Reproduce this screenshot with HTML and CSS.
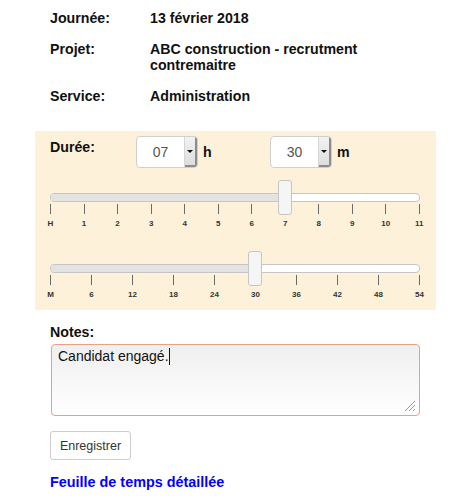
FILE: index.html
```html
<!DOCTYPE html>
<html lang="fr">
<head>
<meta charset="utf-8">
<title>Feuille de temps</title>
<link rel="stylesheet" href="styles.css">
</head>
<body>
<div class="page">
  <div class="info">
    <div class="lbl">Journée:</div><div class="val">13 février 2018</div>
    <div class="lbl">Projet:</div><div class="val">ABC construction - recrutment contremaitre</div>
    <div class="lbl">Service:</div><div class="val">Administration</div>
  </div>

  <div class="panel">
    <div class="duree-row">
      <div class="duree-lbl">Durée:</div>
      <div class="sel-group">
        <div class="sel"><span class="sel-val">07</span><span class="sel-btn"><span class="arrow"></span></span></div>
        <span class="unit">h</span>
      </div>
      <div class="sel-group">
        <div class="sel"><span class="sel-val">30</span><span class="sel-btn"><span class="arrow"></span></span></div>
        <span class="unit">m</span>
      </div>
    </div>

    <div class="slider s1">
      <div class="track">
        <div class="range" style="width:234px"></div>
        <div class="handle" style="left:227px"></div>
      </div>
      <div class="ticks">
        <div class="tick"><i></i><span>H</span></div>
        <div class="tick"><i></i><span>1</span></div>
        <div class="tick"><i></i><span>2</span></div>
        <div class="tick"><i></i><span>3</span></div>
        <div class="tick"><i></i><span>4</span></div>
        <div class="tick"><i></i><span>5</span></div>
        <div class="tick"><i></i><span>6</span></div>
        <div class="tick"><i></i><span>7</span></div>
        <div class="tick"><i></i><span>8</span></div>
        <div class="tick"><i></i><span>9</span></div>
        <div class="tick"><i></i><span>10</span></div>
        <div class="tick"><i></i><span>11</span></div>
      </div>
    </div>

    <div class="slider s2">
      <div class="track">
        <div class="range" style="width:204px"></div>
        <div class="handle" style="left:197px"></div>
      </div>
      <div class="ticks">
        <div class="tick"><i></i><span>M</span></div>
        <div class="tick"><i></i><span>6</span></div>
        <div class="tick"><i></i><span>12</span></div>
        <div class="tick"><i></i><span>18</span></div>
        <div class="tick"><i></i><span>24</span></div>
        <div class="tick"><i></i><span>30</span></div>
        <div class="tick"><i></i><span>36</span></div>
        <div class="tick"><i></i><span>42</span></div>
        <div class="tick"><i></i><span>48</span></div>
        <div class="tick"><i></i><span>54</span></div>
      </div>
    </div>
  </div>

  <div class="notes">
    <div class="notes-lbl">Notes:</div>
    <div class="textarea">Candidat engagé.<span class="caret"></span>
      <svg class="grip" width="12" height="12" viewBox="0 0 12 12">
        <line x1="11" y1="1" x2="1" y2="11" stroke="#999" stroke-width="1"/>
        <line x1="11" y1="5" x2="5" y2="11" stroke="#999" stroke-width="1"/>
        <line x1="11" y1="9" x2="9" y2="11" stroke="#999" stroke-width="1"/>
      </svg>
    </div>
    <button class="btn" type="button">Enregistrer</button>
    <a class="link" href="#">Feuille de temps détaillée</a>
  </div>
</div>
</body>
</html>
```

FILE: styles.css
```css
* { box-sizing: border-box; }
body {
  margin: 0;
  background: #fff;
  font-family: "Liberation Sans", Arial, sans-serif;
  color: #111;
}
.page {
  padding-top: 10px;
}
.info {
  display: grid;
  grid-template-columns: 100px 250px;
  row-gap: 15px;
  margin-left: 50px;
  font-size: 14.2px;
  line-height: 16px;
  font-weight: bold;
}
.panel {
  margin: 27px 0 0 35px;
  width: 401px;
  background: #fdf2d9;
  padding: 5px 15px 10px 15px;
}
.duree-row {
  display: flex;
  align-items: flex-start;
}
.duree-lbl {
  width: 86px;
  font-size: 14.2px;
  line-height: 16px;
  font-weight: bold;
  padding-top: 3px;
}
.sel-group {
  width: 134px;
  display: flex;
  align-items: center;
}
.sel {
  width: 62px;
  height: 32px;
  background: #fff;
  border: 1px solid #cfcfcf;
  border-radius: 4px;
  display: flex;
  overflow: hidden;
}
.sel-val {
  flex: 1;
  text-align: center;
  font-size: 14px;
  line-height: 30px;
  color: #555;
}
.sel-btn {
  width: 13px;
  background: linear-gradient(#f2f2f2, #dcdcdc);
  border-left: 1px solid #d6d6d6;
  box-shadow: inset -2px -2px 0 #8c8c8c;
  display: flex;
  align-items: center;
  padding-left: 2px;
}
.arrow {
  width: 0;
  height: 0;
  border-left: 3px solid transparent;
  border-right: 3px solid transparent;
  border-top: 3px solid #111;
  margin-top: -1px;
}
.unit {
  margin-left: 5px;
  font-size: 14.2px;
  font-weight: bold;
  line-height: 16px;
}
.slider {
  width: 370px;
}
.s1 { margin-top: 25px; }
.s2 { margin-top: 35px; }
.track {
  position: relative;
  height: 9px;
  background: #fff;
  border: 1px solid #c5c5c5;
  border-radius: 4px;
}
.range {
  height: 100%;
  background: #e3e3e3;
  border-radius: 3px 0 0 3px;
}
.handle {
  position: absolute;
  top: -14px;
  width: 14px;
  height: 35px;
  background: #f5f5f5;
  border: 1px solid #c5c5c5;
  border-radius: 3px;
}
.ticks {
  display: flex;
  justify-content: space-between;
  margin-top: 2px;
}
.tick {
  width: 1px;
  display: flex;
  flex-direction: column;
  align-items: center;
}
.tick i {
  display: block;
  width: 1px;
  height: 10px;
  background: #6a6a6a;
}
.tick span {
  white-space: nowrap;
  font-size: 8px;
  font-weight: bold;
  line-height: 10px;
  color: #333;
  margin-top: 5px;
}
.notes {
  margin-left: 50px;
  padding-top: 14px;
}
.notes-lbl {
  font-size: 14.2px;
  line-height: 16px;
  font-weight: bold;
}
.textarea {
  position: relative;
  margin: 4px 0 0 1px;
  width: 369px;
  height: 72px;
  border: 1px solid #e9a088;
  border-radius: 4px;
  background: linear-gradient(#efefef, #ffffff);
  padding: 3px 6px;
  font-size: 14px;
  line-height: 16px;
  color: #111;
}
.caret {
  display: inline-block;
  width: 1px;
  height: 17px;
  background: #111;
  vertical-align: -4px;
}
.grip {
  position: absolute;
  right: 3px;
  bottom: 3px;
}
.btn {
  display: block;
  margin-top: 15px;
  width: 81px;
  height: 29px;
  background: #fff;
  border: 1px solid #ccc;
  border-radius: 3px;
  font-family: "Liberation Sans", Arial, sans-serif;
  font-size: 12.5px;
  color: #333;
  padding: 0;
}
.link {
  display: inline-block;
  margin-top: 14px;
  font-size: 14.4px;
  line-height: 16px;
  font-weight: bold;
  color: #0000ff;
  text-decoration: none;
}
```
